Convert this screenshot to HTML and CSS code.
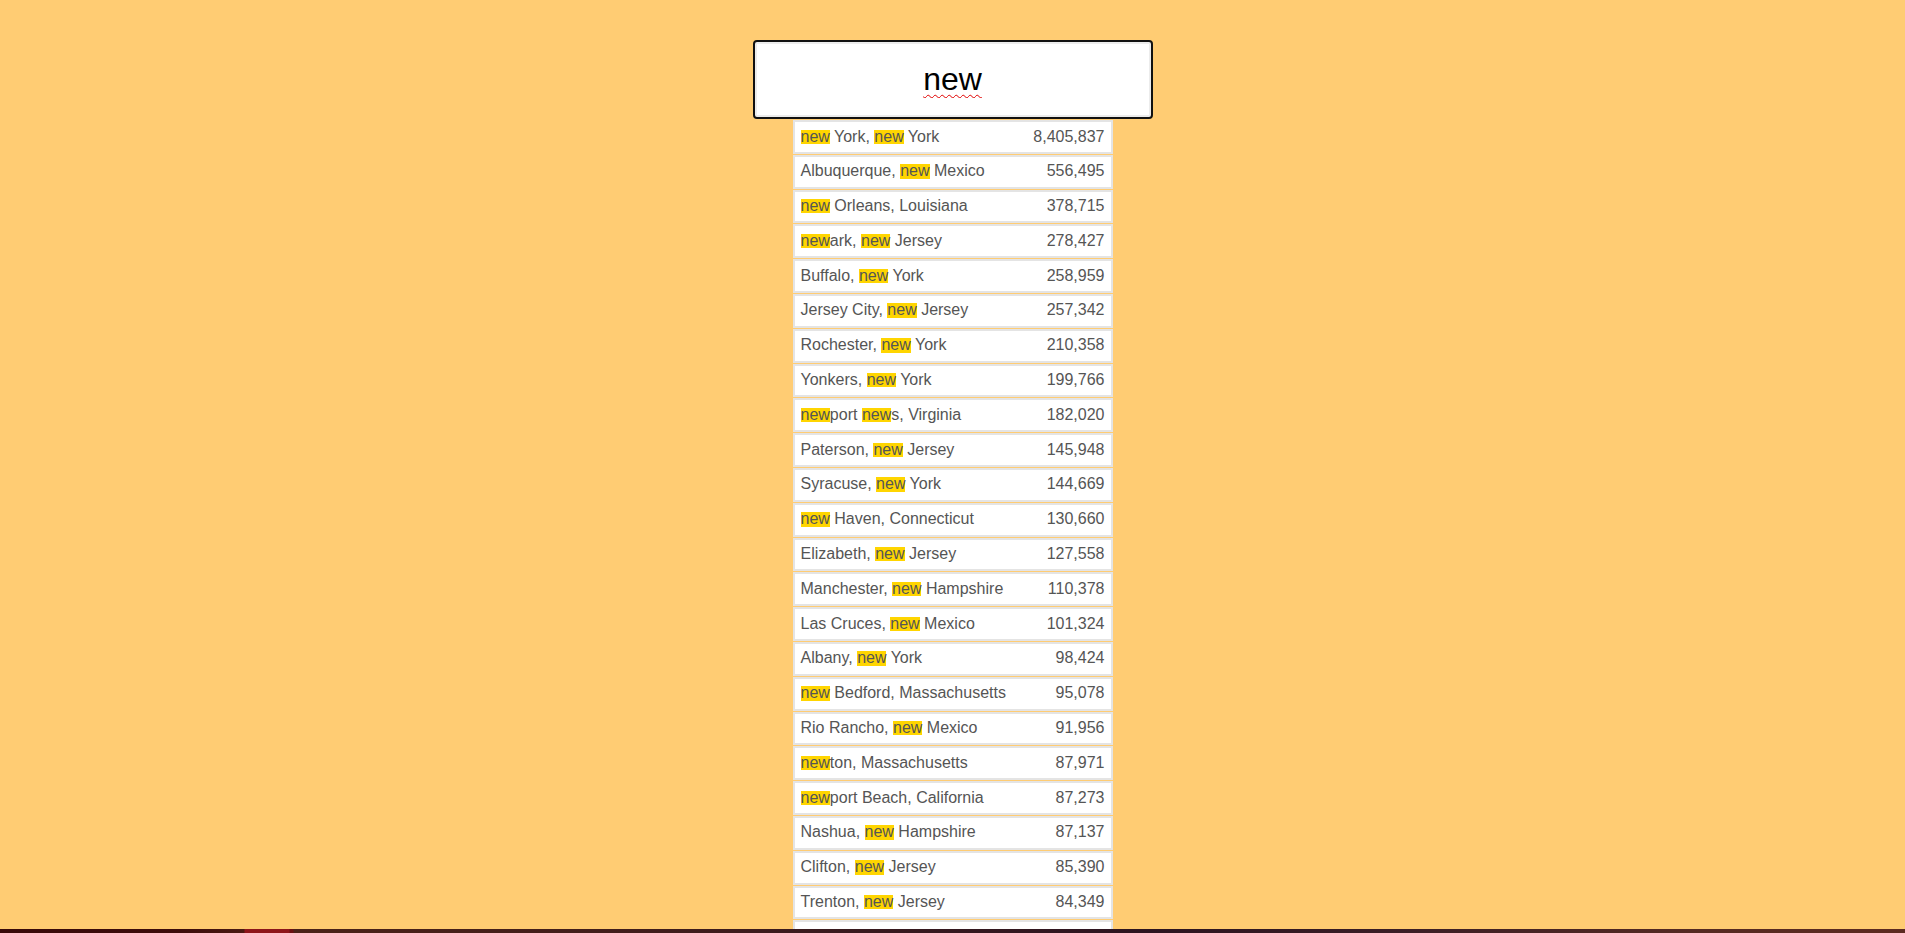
FILE: index.html
```html
<!DOCTYPE html>
<html lang="en">
<head>
<meta charset="utf-8">
<title>Type Ahead</title>
<link rel="stylesheet" href="styles.css">
</head>
<body>
<form class="search-form">
  <input type="text" class="search" value="new" placeholder="City or State">
  <ul class="suggestions">
    <li><span class="name"><span class="hl">new</span> York, <span class="hl">new</span> York</span><span class="population">8,405,837</span></li>
    <li><span class="name">Albuquerque, <span class="hl">new</span> Mexico</span><span class="population">556,495</span></li>
    <li><span class="name"><span class="hl">new</span> Orleans, Louisiana</span><span class="population">378,715</span></li>
    <li><span class="name"><span class="hl">new</span>ark, <span class="hl">new</span> Jersey</span><span class="population">278,427</span></li>
    <li><span class="name">Buffalo, <span class="hl">new</span> York</span><span class="population">258,959</span></li>
    <li><span class="name">Jersey City, <span class="hl">new</span> Jersey</span><span class="population">257,342</span></li>
    <li><span class="name">Rochester, <span class="hl">new</span> York</span><span class="population">210,358</span></li>
    <li><span class="name">Yonkers, <span class="hl">new</span> York</span><span class="population">199,766</span></li>
    <li><span class="name"><span class="hl">new</span>port <span class="hl">new</span>s, Virginia</span><span class="population">182,020</span></li>
    <li><span class="name">Paterson, <span class="hl">new</span> Jersey</span><span class="population">145,948</span></li>
    <li><span class="name">Syracuse, <span class="hl">new</span> York</span><span class="population">144,669</span></li>
    <li><span class="name"><span class="hl">new</span> Haven, Connecticut</span><span class="population">130,660</span></li>
    <li><span class="name">Elizabeth, <span class="hl">new</span> Jersey</span><span class="population">127,558</span></li>
    <li><span class="name">Manchester, <span class="hl">new</span> Hampshire</span><span class="population">110,378</span></li>
    <li><span class="name">Las Cruces, <span class="hl">new</span> Mexico</span><span class="population">101,324</span></li>
    <li><span class="name">Albany, <span class="hl">new</span> York</span><span class="population">98,424</span></li>
    <li><span class="name"><span class="hl">new</span> Bedford, Massachusetts</span><span class="population">95,078</span></li>
    <li><span class="name">Rio Rancho, <span class="hl">new</span> Mexico</span><span class="population">91,956</span></li>
    <li><span class="name"><span class="hl">new</span>ton, Massachusetts</span><span class="population">87,971</span></li>
    <li><span class="name"><span class="hl">new</span>port Beach, California</span><span class="population">87,273</span></li>
    <li><span class="name">Nashua, <span class="hl">new</span> Hampshire</span><span class="population">87,137</span></li>
    <li><span class="name">Clifton, <span class="hl">new</span> Jersey</span><span class="population">85,390</span></li>
    <li><span class="name">Trenton, <span class="hl">new</span> Jersey</span><span class="population">84,349</span></li>
    <li><span class="name"><span class="hl">new</span> Rochelle, <span class="hl">new</span> York</span><span class="population">79,446</span></li>
    <li><span class="name">Mount Vernon, <span class="hl">new</span> York</span><span class="population">67,896</span></li>
    <li><span class="name">Schenectady, <span class="hl">new</span> York</span><span class="population">66,078</span></li>
  </ul>
</form>
<div class="taskbar-edge"></div>
</body>
</html>
```

FILE: styles.css
```css
html {
  background: #ffcc73;
  scrollbar-width: none;
}
html::-webkit-scrollbar {
  display: none;
}
body {
  margin: 0;
  font-family: "Liberation Sans", Arial, sans-serif;
  font-size: 16px;
  color: #555;
}
.search-form {
  display: flex;
  flex-direction: column;
  align-items: center;
  padding-top: 40px;
}
.search {
  box-sizing: border-box;
  width: 400px;
  height: 79px;
  margin: 0;
  padding: 0 10px;
  border: 2px solid #111;
  border-radius: 4px;
  box-shadow: inset 0 0 0 2px #ececec;
  background: #fff;
  outline: none;
  text-align: center;
  font-family: "Liberation Sans", Arial, sans-serif;
  font-size: 32px;
  color: #000;
  text-decoration: underline wavy #e00000;
  text-decoration-thickness: 1px;
  text-underline-offset: 4px;
}
.suggestions {
  width: 320px;
  margin: 1px 0 0;
  padding: 0;
  list-style: none;
}
.suggestions li {
  display: flex;
  justify-content: space-between;
  background: #fff;
  border: 2px solid #e4e4e4;
  margin-bottom: 1px;
  padding: 5.5px 6px;
  line-height: 18.8px;
}
.hl {
  display: inline-block;
  background: #ffd500;
  line-height: 14.3px;
}
.taskbar-edge {
  position: fixed;
  left: 0;
  right: 0;
  bottom: 0;
  height: 4px;
  background: linear-gradient(to right, #380909 0, #3d0c0b 180px, #4a1a12 244px, #8e151a 245px, #8e151a 289px, #6b1012 290px, #6b1012 293px, #4b2218 294px, #3e1c1c 700px, #2c1420 1150px, #3a1e26 1400px, #552a22 1700px, #5c2a20 1905px);
}
```
